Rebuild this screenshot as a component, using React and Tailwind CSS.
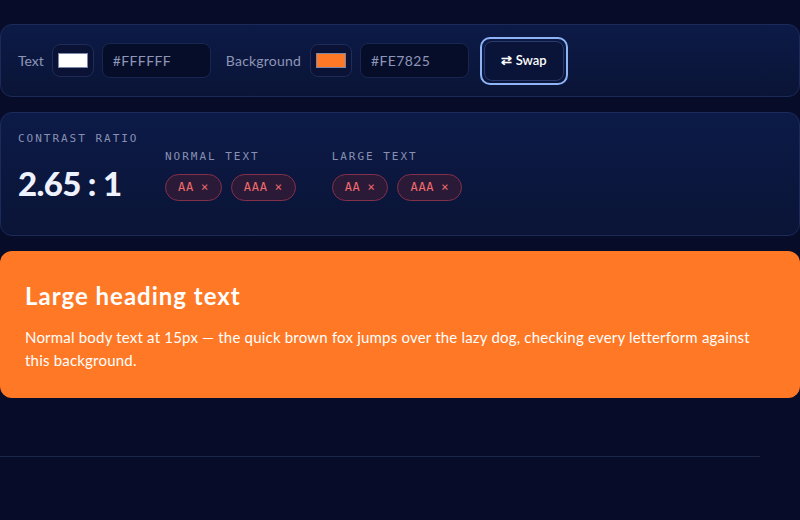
import { useState } from "react";

const sans = "font-['Lato','Noto_Sans',sans-serif]";
const mono = "font-['DejaVu_Sans_Mono','Liberation_Mono',monospace]";

const Swatch = ({ color }) => (
  <div className="flex items-center justify-center w-[42px] h-[33px] rounded-lg border border-[#1f2c58] bg-[#0a1336]">
    <div className="w-[30px] h-[15px] border border-[#7c86a8]" style={{ background: color }} />
  </div>
);

const HexField = ({ value }) => (
  <div className={`flex items-center w-[109px] h-[35px] px-[10px] rounded-lg border border-[#1a2650] bg-[#060d29] text-[14px] tracking-wide text-[#8d96b8] ${sans}`}>
    {value}
  </div>
);

const Pill = ({ label }) => (
  <span className={`flex items-center gap-[7px] h-[27px] px-[12px] rounded-full border border-[#85304a] bg-[#2a1a38] text-[12px] tracking-[0.06em] text-[#f06b6b] ${mono}`}>
    {label}
    <span className="text-[12px]">×</span>
  </span>
);

const Level = ({ title }) => (
  <div className="flex flex-col gap-[8px] pt-[36px]">
    <span className={`text-[11px] tracking-[0.18em] text-[#8890b3] ${mono}`}>{title}</span>
    <div className="flex gap-[9px]">
      <Pill label="AA" />
      <Pill label="AAA" />
    </div>
  </div>
);

export default function App() {
  const [fg, setFg] = useState("#FFFFFF");
  const [bg, setBg] = useState("#FE7825");

  const swap = () => {
    setFg(bg);
    setBg(fg);
  };

  return (
    <div className={`min-h-[520px] w-[800px] bg-[#070d28] pt-[24px] ${sans}`}>
      {/* Colour pickers */}
      <div className="flex items-center h-[73px] px-[17px] rounded-xl border border-[#1c2a5a] bg-gradient-to-b from-[#0c1a47] to-[#0a1436]">
        <span className="text-[14px] text-[#8d96b8] mr-[8px]">Text</span>
        <Swatch color={fg} />
        <div className="ml-[8px]">
          <HexField value={fg} />
        </div>
        <span className="text-[14px] tracking-[0.2px] text-[#8d96b8] ml-[15px] mr-[9px]">Background</span>
        <Swatch color={bg} />
        <div className="ml-[8px]">
          <HexField value={bg} />
        </div>
        <div className="ml-[11px] p-[2px] rounded-[10px] border-2 border-[#8fb4f5]">
          <button
            onClick={swap}
            className="flex items-center justify-center w-[80px] h-[40px] rounded-lg border border-[#2a3a6c] bg-[#0a1438] text-[13px] font-semibold text-white"
          >
            ⇄ Swap
          </button>
        </div>
      </div>

      {/* Ratio + WCAG levels */}
      <div className="flex items-start h-[124px] mt-[15px] px-[17px] rounded-xl border border-[#1c2a5a] bg-gradient-to-b from-[#0c1a47] to-[#0a1436]">
        <div className="flex flex-col pt-[18px] w-[147px]">
          <span className={`text-[11px] tracking-[0.18em] text-[#8890b3] ${mono}`}>CONTRAST RATIO</span>
          <span className="mt-[19px] text-[33px] leading-none font-black tracking-[-0.02em] text-[#eef2ff]">2.65 : 1</span>
        </div>
        <div className="flex gap-[36px]">
          <Level title="NORMAL TEXT" />
          <Level title="LARGE TEXT" />
        </div>
      </div>

      {/* Preview */}
      <div className="mt-[15px] h-[147px] px-[25px] pt-[30px] rounded-xl" style={{ background: bg, color: fg }}>
        <h2 className="text-[24px] font-bold leading-tight tracking-[1px]">Large heading text</h2>
        <p className="mt-[15px] text-[15px] leading-[23px] tracking-[0.2px]">
          Normal body text at 15px — the quick brown fox jumps over the lazy dog, checking every letterform against this background.
        </p>
      </div>

      <div className="mt-[58px] w-[760px] h-px bg-[#1c2748]" />
    </div>
  );
}
